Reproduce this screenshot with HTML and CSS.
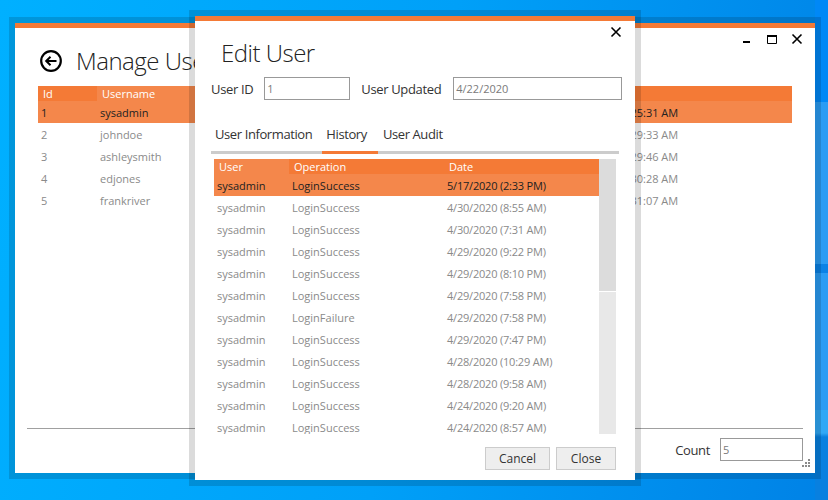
FILE: index.html
```html
<!DOCTYPE html>
<html lang="en">

<head>
  <meta charset="UTF-8">
  <title>Manage Users</title>
  <link rel="stylesheet" href="styles.css">
</head>

<body>
  <div class="desktop">
    <div class="window main-window">
      <div class="win-controls">
        <svg class="ctl" width="14" height="14" viewBox="0 0 14 14"><path d="M3 9h7" stroke="#000" stroke-width="2" fill="none"/></svg>
        <svg class="ctl" width="14" height="14" viewBox="0 0 14 14"><path d="M2.5 2.5h9v8h-9z" stroke="#000" stroke-width="1" fill="none"/><path d="M2 3h10" stroke="#000" stroke-width="2" fill="none"/></svg>
        <svg class="ctl" width="14" height="14" viewBox="0 0 14 14"><path d="M2.5 1.5l9 9M11.5 1.5l-9 9" stroke="#000" stroke-width="1.6" fill="none"/></svg>
      </div>
      <div class="title-row">
        <svg width="24" height="24" viewBox="0 0 24 24"><circle cx="12" cy="12" r="9.8" stroke="#000" stroke-width="2.2" fill="none"/><path d="M17.5 12H7.5M11.5 7.8L7.2 12l4.3 4.2" stroke="#000" stroke-width="2" fill="none"/></svg>
        <h1 class="title">Manage Users</h1>
      </div>
      <table class="grid main-grid">
        <colgroup><col class="c-id"><col class="c-name"><col></colgroup>
        <thead>
          <tr><th>Id</th><th class="hot">Username</th><th>Last Login</th></tr>
        </thead>
        <tbody>
          <tr class="sel"><td>1</td><td>sysadmin</td><td>5/17/2020 10:25:31 AM</td></tr>
          <tr><td>2</td><td>johndoe</td><td>4/20/2020 10:29:33 AM</td></tr>
          <tr><td>3</td><td>ashleysmith</td><td>4/20/2020 10:29:46 AM</td></tr>
          <tr><td>4</td><td>edjones</td><td>4/20/2020 10:30:28 AM</td></tr>
          <tr><td>5</td><td>frankriver</td><td>4/20/2020 10:31:07 AM</td></tr>
        </tbody>
      </table>
      <div class="footer">
        <label class="lbl">Count</label>
        <input class="field count" type="text" value="5">
      </div>
      <svg class="grip" width="10" height="10" viewBox="0 0 10 10" fill="#8a8a8a"><path d="M7 0h2v2H7zM4 3h2v2H4zM7 3h2v2H7zM1 6h2v2H1zM4 6h2v2H4zM7 6h2v2H7z"/></svg>
    </div>

    <div class="window dialog">
      <div class="dlg-close">
        <svg width="12" height="12" viewBox="0 0 12 12"><path d="M1.5 1.5l9 9M10.5 1.5l-9 9" stroke="#000" stroke-width="1.6" fill="none"/></svg>
      </div>
      <h2 class="dlg-title">Edit User</h2>
      <div class="form-row">
        <label class="lbl">User ID</label>
        <input class="field id-field" type="text" value="1">
        <label class="lbl updated">User Updated</label>
        <input class="field date-field" type="text" value="4/22/2020">
      </div>
      <div class="tabs">
        <div class="tab">User Information</div>
        <div class="tab active">History</div>
        <div class="tab">User Audit</div>
      </div>
      <div class="history">
        <table class="grid hist-grid">
          <colgroup><col class="c-user"><col class="c-op"><col></colgroup>
          <thead>
            <tr><th class="hot">User</th><th>Operation</th><th>Date</th></tr>
          </thead>
          <tbody>
            <tr class="sel"><td>sysadmin</td><td>LoginSuccess</td><td>5/17/2020 (2:33 PM)</td></tr>
            <tr><td>sysadmin</td><td>LoginSuccess</td><td>4/30/2020 (8:55 AM)</td></tr>
            <tr><td>sysadmin</td><td>LoginSuccess</td><td>4/30/2020 (7:31 AM)</td></tr>
            <tr><td>sysadmin</td><td>LoginSuccess</td><td>4/29/2020 (9:22 PM)</td></tr>
            <tr><td>sysadmin</td><td>LoginSuccess</td><td>4/29/2020 (8:10 PM)</td></tr>
            <tr><td>sysadmin</td><td>LoginSuccess</td><td>4/29/2020 (7:58 PM)</td></tr>
            <tr><td>sysadmin</td><td>LoginFailure</td><td>4/29/2020 (7:58 PM)</td></tr>
            <tr><td>sysadmin</td><td>LoginSuccess</td><td>4/29/2020 (7:47 PM)</td></tr>
            <tr><td>sysadmin</td><td>LoginSuccess</td><td>4/28/2020 (10:29 AM)</td></tr>
            <tr><td>sysadmin</td><td>LoginSuccess</td><td>4/28/2020 (9:58 AM)</td></tr>
            <tr><td>sysadmin</td><td>LoginSuccess</td><td>4/24/2020 (9:20 AM)</td></tr>
            <tr><td>sysadmin</td><td>LoginSuccess</td><td>4/24/2020 (8:57 AM)</td></tr>
          </tbody>
        </table>
        <div class="scroll"><div class="thumb"></div><div class="track"></div></div>
      </div>
      <div class="actions">
        <button class="btn cancel">Cancel</button>
        <button class="btn close">Close</button>
      </div>
    </div>
  </div>
</body>

</html>
```
FILE: styles.css
```css
* {
  box-sizing: border-box;
}

body {
  margin: 0;
  font-family: "Open Sans", "Noto Sans", sans-serif;
}

.desktop {
  position: relative;
  width: 828px;
  height: 500px;
  overflow: hidden;
  background-color: #0090f4;
  background-image:
    linear-gradient(to bottom, #0088f6 0, #0088f6 102px, #2a9cf4 102px, #2a9cf4 264px, #0a82e6 264px, #0a82e6 273px, #2a9cf4 273px, #2a9cf4 410px, #30a8f6 410px, #30a8f6 433px, #0880e0 437px, #0880e0 100%),
    linear-gradient(100deg, #00b0ff 0%, #00a0f8 50%, #0082e6 100%);
  background-repeat: no-repeat;
  background-position: right top, 0 0;
  background-size: 13px 100%, 100% 100%;
}

.window {
  position: absolute;
  display: flex;
  flex-direction: column;
  background: #fff;
  border-top: 5px solid #f47a36;
  box-shadow: 0 0 0 6px rgba(0, 0, 0, 0.14);
}

.main-window {
  left: 15px;
  top: 23px;
  width: 800px;
  height: 450px;
}

.dialog {
  left: 195px;
  top: 16px;
  width: 440px;
  height: 464px;
}

/* main window */
.win-controls {
  display: flex;
  justify-content: flex-end;
  gap: 11px;
  height: 20px;
  padding: 5px 11px 0 0;
}

.title-row {
  display: flex;
  align-items: center;
  gap: 13px;
  height: 26px;
  margin-left: 24px;
}

.title {
  margin: 0;
  font-size: 24px;
  font-weight: 300;
  line-height: 26px;
  letter-spacing: -0.5px;
  color: #222;
}

.grid {
  border-collapse: collapse;
  table-layout: fixed;
  font-size: 11px;
  color: #8a8a8a;
}

.grid th {
  height: 15px;
  padding: 0 0 0 5px;
  font-weight: 400;
  line-height: 15px;
  text-align: left;
  color: #fff;
  background: #f47a36;
}

.grid th.hot {
  background: #f4874b;
}

.grid td {
  height: 22px;
  padding: 0 0 0 3px;
  white-space: nowrap;
}

.grid .sel td {
  color: #222;
  background: #f4874b;
}

.main-grid {
  width: 754px;
  margin: 12px 0 0 23px;
}

.c-id {
  width: 59px;
}

.c-name {
  width: 460px;
}

.footer {
  display: flex;
  align-items: center;
  justify-content: flex-end;
  gap: 10px;
  margin: auto 12px 12px;
  padding-top: 9px;
  border-top: 1px solid #a0a0a0;
}

.lbl {
  font-size: 13px;
  letter-spacing: -0.35px;
  color: #333;
}

.field {
  height: 23px;
  padding: 0 2px;
  border: 1px solid #999;
  font-family: inherit;
  font-size: 11px;
  color: #7a7a7a;
  outline: none;
}

.count {
  width: 83px;
}

.grip {
  position: absolute;
  right: 4px;
  bottom: 4px;
}

/* dialog */
.dlg-close {
  display: flex;
  justify-content: flex-end;
  height: 16px;
  padding: 5px 13px 0 0;
}

.dlg-title {
  margin: 1px 0 0 26px;
  font-size: 24px;
  font-weight: 300;
  line-height: 30px;
  letter-spacing: -0.5px;
  color: #222;
}

.form-row {
  display: flex;
  align-items: center;
  margin: 9px 0 0 16px;
}

.id-field {
  width: 86px;
  margin-left: 11px;
}

.updated {
  margin-left: 11px;
}

.date-field {
  width: 169px;
  margin-left: 12px;
}

.tabs {
  display: flex;
  width: 408px;
  height: 34px;
  margin: 20px 0 0 16px;
  border-bottom: 3px solid #ccc;
}

.tab {
  height: 34px;
  padding: 5px 10px 0 4px;
  border-bottom: 3px solid transparent;
  font-size: 13px;
  letter-spacing: -0.4px;
  color: #333;
}

.tab.active {
  padding-right: 11px;
  border-bottom-color: #f47a36;
}

.tab:last-child {
  padding-left: 5px;
}

.history {
  display: flex;
  align-items: flex-start;
  height: 275px;
  margin: 5px 0 0 19px;
  overflow: hidden;
}

.hist-grid {
  width: 385px;
}

.hist-grid td:last-child {
  letter-spacing: -0.2px;
}

.c-user {
  width: 75px;
}

.c-op {
  width: 155px;
}

.scroll {
  display: flex;
  flex-direction: column;
  gap: 1px;
  width: 17px;
  height: 275px;
}

.thumb {
  height: 132px;
  background: #dcdcdc;
}

.track {
  flex: 1;
  background: #e8e8e8;
}

.actions {
  display: flex;
  justify-content: flex-end;
  gap: 6px;
  margin: 13px 19px 0 0;
}

.btn {
  height: 23px;
  padding: 0;
  border: 1px solid #ccc;
  background: #eee;
  font-family: inherit;
  font-size: 12px;
  color: #333;
}

.cancel {
  width: 65px;
}

.close {
  width: 60px;
}
```
